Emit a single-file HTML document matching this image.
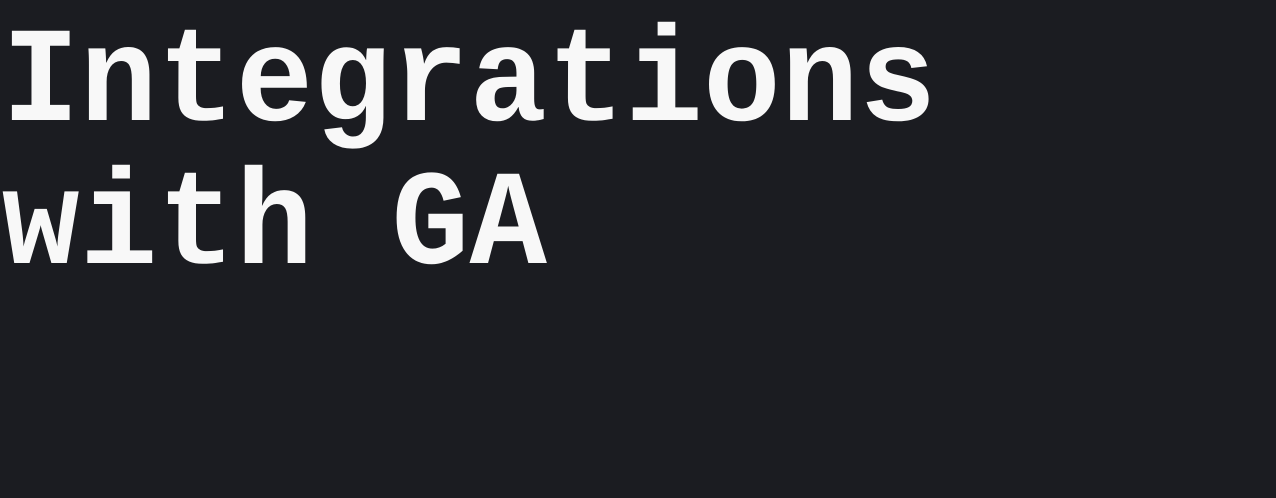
<!DOCTYPE html>
<html><head><meta charset="utf-8"><style>
html,body{margin:0;padding:0;width:1276px;height:498px;background:#1b1c21;overflow:hidden}
.l{position:absolute;left:2px;font-family:"Liberation Mono",monospace;font-weight:bold;font-size:129px;line-height:143px;color:#f8f8f8;white-space:pre;transform:scaleY(1.05);transform-origin:0 106px;letter-spacing:0.5px}
</style></head><body>
<div class="l" style="top:15px">Integrations</div>
<div class="l" style="top:158px">with GA</div>
</body></html>
